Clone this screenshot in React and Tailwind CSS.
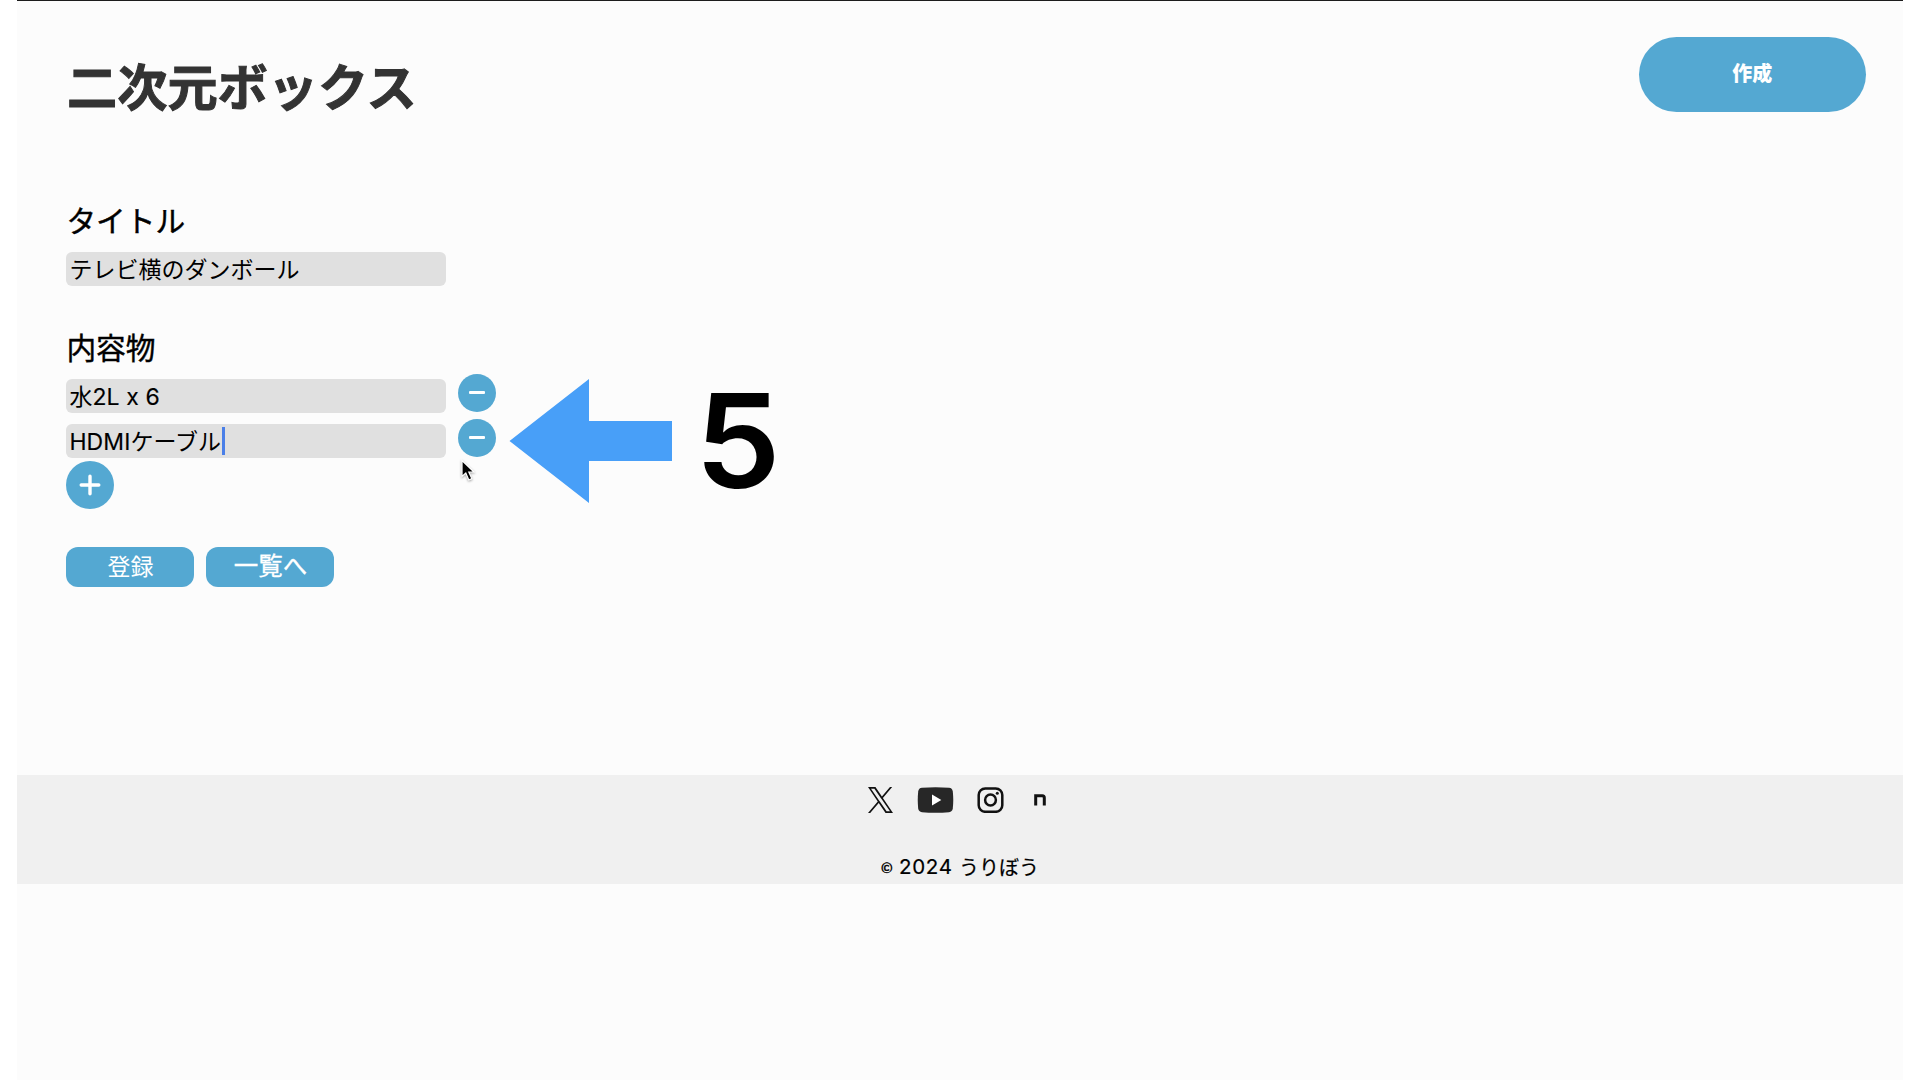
const BLUE_BUTTON = "flex items-center justify-center bg-[#54a8d2] text-white";

function Field({ children, caret }) {
  return (
    <div className="flex h-[34px] w-[380px] items-center rounded-[6px] bg-[#e0e0e0] pl-[3px] text-[23px] leading-[34px] whitespace-pre text-black">
      <span className="flex h-[34px] -translate-y-px items-baseline">{children}</span>
      {caret && <span className="ml-px h-[28px] w-[3px] bg-[#4a7fe8]" />}
    </div>
  );
}

function Latin({ children }) {
  return <span className="font-['Inter'] text-[23px] tracking-[0.1px] [-webkit-text-stroke:0.15px_black]">{children}</span>;
}

function SectionTitle({ children }) {
  return (
    <h2 className="h-[52px] text-[29.7px] leading-[40px] font-normal text-black [-webkit-text-stroke:0.4px_black]">
      {children}
    </h2>
  );
}

function MinusButton() {
  return (
    <button className={`${BLUE_BUTTON} -mt-[5.5px] h-[38px] w-[38px] rounded-full`}>
      <span className="h-[3px] w-[16px] rounded-[1px] bg-white" />
    </button>
  );
}

function Cursor() {
  return (
    <svg className="absolute left-[459px] top-[458px] drop-shadow-[0_1px_1px_rgba(0,0,0,0.35)]" width="18" height="26" viewBox="0 0 18 26">
      <path d="M3 2.5V18.5L6.8 15L9.8 22L12.8 20.6L9.8 14H15Z" fill="#000" stroke="#fff" strokeWidth="1.2" />
    </svg>
  );
}

function Header() {
  return (
    <header className="flex h-[112px] items-start justify-between pl-[50px] pr-[37px]">
      <h1 className="mt-[47px] text-[50.2px] leading-[72px] font-bold text-[#333] [-webkit-text-stroke:1px_#333]">二次元ボックス</h1>
      <button className={`${BLUE_BUTTON} mt-[36.4px] h-[75px] w-[227.5px] rounded-[38px] pb-[3px] text-[20px] font-extrabold`}>
        作成
      </button>
    </header>
  );
}

function Form() {
  return (
    <main className="h-[662px] pl-[49.4px] pt-[87px]">
      <SectionTitle>タイトル</SectionTitle>
      <Field>テレビ横のダンボール</Field>
      <div className="h-[41.400px]" />
      <SectionTitle>内容物</SectionTitle>
      <div className="flex h-[45px] gap-[12px]">
        <Field>
          水<Latin>2L x 6</Latin>
        </Field>
        <MinusButton />
      </div>
      <div className="flex h-[37px] gap-[12px]">
        <Field caret>
          <Latin>HDMI</Latin>ケーブル
        </Field>
        <MinusButton />
      </div>
      <button className={`${BLUE_BUTTON} h-[48px] w-[48px] rounded-full`}>
        <svg width="22" height="22" viewBox="0 0 22 22" stroke="#fff" strokeWidth="3.4" strokeLinecap="round">
          <path d="M11 2.2V19.8M2.2 11H19.8" />
        </svg>
      </button>
      <div className="mt-[37.400px] flex gap-[12px] text-[23px]">
        <button className={`${BLUE_BUTTON} h-[40px] w-[128px] rounded-[12px] pb-[3px]`}>登録</button>
        <button className={`${BLUE_BUTTON} h-[40px] w-[128px] rounded-[12px] pb-[2px] text-[24.5px] [-webkit-text-stroke:0.3px_white]`}>一覧へ</button>
      </div>
    </main>
  );
}

function Footer() {
  return (
    <footer className="h-[109px] bg-[#f0f0f0] pt-[12px]">
      <div className="flex h-[26px] items-center pl-[851px]">
        <svg width="25" height="26" viewBox="0 0 1200 1227" preserveAspectRatio="none" fill="#111">
          <path d="M714.163 519.284L1160.89 0H1055.03L667.137 450.887L357.328 0H0L468.492 681.821L0 1226.37H105.866L515.491 750.218L842.672 1226.37H1200L714.137 519.284H714.163ZM569.165 687.828L521.697 619.934L144.011 79.6944H306.615L611.412 515.685L658.88 583.579L1055.08 1150.3H892.476L569.165 687.854V687.828Z" />
        </svg>
        <svg className="ml-[23.500px]" width="37" height="26" viewBox="0 0 37 26">
          <path d="M5 .8Q18.500 -.3 32 .8Q35.300 1.100 35.800 4.500Q36.700 13 35.800 21.500Q35.300 24.900 32 25.200Q18.500 26.300 5 25.200Q1.700 24.900 1.200 21.500Q.3 13 1.200 4.500Q1.700 1.100 5 .8Z" fill="#272727" />
          <path d="M15 7.500V18.500L24.300 13Z" fill="#fff" />
        </svg>
        <svg className="ml-[23px]" width="27" height="26" viewBox="0 0 27 26" fill="none" stroke="#111" strokeWidth="2.500">
          <rect x="1.700" y="1.400" width="23.600" height="23.400" rx="6.600" />
          <circle cx="13.500" cy="13" r="5.400" />
          <circle cx="20.300" cy="6.200" r="1.500" fill="#111" stroke="none" />
        </svg>
        <svg className="ml-[30px]" width="12" height="12" viewBox="0 0 12 12" fill="none" stroke="#111" strokeWidth="3">
          <path d="M1.700 11.600V1.700H8.300Q10.300 1.700 10.300 3.700V11.600" />
        </svg>
      </div>
      <p className="mt-[39px] flex h-[30px] items-center pl-[864px] text-[20px] leading-[30px] text-black [-webkit-text-stroke:0.2px_black]">
        <span className="w-[18px] text-[14px] [-webkit-text-stroke:0.5px_black]">©</span>
        <span className="w-[60px] font-['Inter'] text-[20.500px] tracking-[0.7px]">2024</span>
        <span>うりぼう</span>
      </p>
    </footer>
  );
}

function Annotation() {
  return (
    <div className="absolute left-[509px] top-[379px] flex h-[124px] items-center">
      <svg width="163" height="124" viewBox="0 0 163 124">
        <path d="M.5 62L80 0V42H163V82H80V124Z" fill="#489ff8" />
      </svg>
      <span className="ml-[23px] origin-left scale-x-[1.04] font-['Inter'] text-[131px] leading-[124px] font-semibold text-black">5</span>
    </div>
  );
}

export default function App() {
  return (
    <div className="relative h-[1080px] w-[1920px] overflow-hidden bg-white pl-[17px] pr-[17px] font-['Noto_Sans_CJK_JP',sans-serif]">
      <div className="h-full border-t border-[#1c1c1c] bg-[#fcfcfc]">
        <Header />
        <Form />
        <Footer />
      </div>
      <Annotation />
      <Cursor />
    </div>
  );
}
